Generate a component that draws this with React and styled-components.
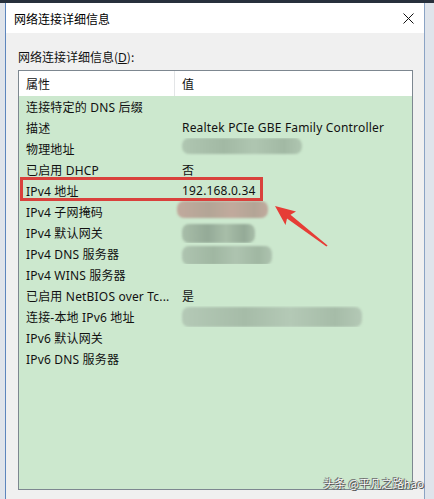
import React from "react";
import styled, { createGlobalStyle } from "styled-components";

const Global = createGlobalStyle`
  html, body { margin: 0; padding: 0; }
  body {
    background: #dfe4eb;
    font-family: "Noto Sans", "Noto Sans CJK SC", sans-serif;
    color: #111;
    overflow: hidden;
  }
`;

const Page = styled.div`
  position: relative;
  width: 434px;
  height: 499px;
  border-top: 3px solid #27303c;
  box-sizing: border-box;
  display: flex;
`;

const Window = styled.div`
  margin-left: 5px;
  width: 420px;
  height: 496px;
  border-left: 1px solid #5d86bd;
  border-right: 1px solid #8aa3c4;
  box-sizing: border-box;
  background: #f0f0f0;
  display: flex;
  flex-direction: column;
`;

const TitleBar = styled.div`
  height: 30px;
  background: #ffffff;
  display: flex;
  align-items: center;
  justify-content: space-between;
  padding: 0 10px 0 8px;
  font-size: 12px;
  font-family: "Noto Sans CJK SC", sans-serif;
  color: #000;
  flex-shrink: 0;
`;

const Body = styled.div`
  flex: 1;
  display: flex;
  flex-direction: column;
  padding: 14px 11px 9px 12px;
  gap: 3px;
`;

const Label = styled.div`
  font-size: 12px;
  line-height: 19px;
  font-family: "Noto Sans CJK SC", sans-serif;
  u { text-decoration: underline; font-family: "Noto Sans", sans-serif; }
`;

const ListBox = styled.div`
  flex: 1;
  border: 1px solid #7d8790;
  background: #cce8ce;
  display: flex;
  flex-direction: column;
`;

const HeaderRow = styled.div`
  height: 25px;
  background: #ffffff;
  display: grid;
  grid-template-columns: 156px 1fr;
  font-size: 12px;
`;

const HeaderCell = styled.div`
  display: flex;
  align-items: center;
  padding-left: 7px;
  border-right: ${(p) => (p.$sep ? "1px solid #e3e5e7" : "none")};
  font-family: "Noto Sans CJK SC", sans-serif;
`;

const Row = styled.div`
  position: relative;
  height: 21px;
  display: grid;
  grid-template-columns: 156px 1fr;
  font-size: 12px;
  letter-spacing: 0.18px;
  white-space: nowrap;
`;

const Cell = styled.div`
  display: flex;
  align-items: center;
  padding-left: 7px;
  overflow: hidden;
`;

const Blur = styled.span`
  display: inline-block;
  width: ${(p) => p.$w}px;
  height: ${(p) => p.$h}px;
  margin-left: ${(p) => p.$dx || 0}px;
  margin-top: ${(p) => p.$dy || 0}px;
  background: linear-gradient(
    90deg,
    ${(p) => p.$c} 0%,
    ${(p) => p.$c2} 35%,
    ${(p) => p.$c} 60%,
    ${(p) => p.$c2} 85%,
    ${(p) => p.$c} 100%
  );
  border-radius: 7px;
  filter: blur(1.3px);
`;

const Highlight = styled.div`
  position: absolute;
  left: 1px;
  top: -3px;
  width: 243px;
  height: 24px;
  border: 3px solid #d9413c;
  box-sizing: border-box;
  pointer-events: none;
`;

const Arrow = styled.svg`
  position: absolute;
  left: 0;
  top: 0;
  pointer-events: none;
`;

const Watermark = styled.div`
  position: absolute;
  right: 10px;
  bottom: 8px;
  font-size: 11px;
  color: #ffffff;
  font-family: "Noto Sans CJK SC", sans-serif;
  text-shadow: 0 0 1px #333, 1px 1px 0 #555, -1px -1px 0 #777;
  letter-spacing: 0.2px;
`;

const rows = [
  { k: "连接特定的 DNS 后缀", v: "" },
  { k: "描述", v: "Realtek PCIe GBE Family Controller" },
  { k: "物理地址", blur: { w: 120, h: 16, dy: -6, c: "#afc6b1", c2: "#a2b9a4" } },
  { k: "已启用 DHCP", v: "否" },
  { k: "IPv4 地址", v: "192.168.0.34", hl: true },
  { k: "IPv4 子网掩码", blur: { w: 91, h: 17, dx: -5, dy: -5, c: "#c1aa9d", c2: "#b3a596" } },
  { k: "IPv4 默认网关", blur: { w: 73, h: 19, dy: 1, c: "#a8bea9", c2: "#94aa97" } },
  { k: "IPv4 DNS 服务器", blur: { w: 90, h: 19, dy: 4, c: "#aec4b0", c2: "#a0b7a2" } },
  { k: "IPv4 WINS 服务器", v: "" },
  { k: "已启用 NetBIOS over Tc...", v: "是" },
  { k: "连接-本地 IPv6 地址", blur: { w: 180, h: 20, dy: 1, c: "#b4c9b6", c2: "#a6bca8" } },
  { k: "IPv6 默认网关", v: "" },
  { k: "IPv6 DNS 服务器", v: "" },
];

function CloseIcon() {
  return (
    <svg width="11" height="11" viewBox="0 0 11 11">
      <path d="M0.5 0.5 L10.5 10.5 M10.5 0.5 L0.5 10.5" stroke="#111" strokeWidth="1" fill="none" />
    </svg>
  );
}

export default function App() {
  return (
    <>
      <Global />
      <Page>
        <Window>
          <TitleBar>
            <span>网络连接详细信息</span>
            <CloseIcon />
          </TitleBar>
          <Body>
            <Label>
              网络连接详细信息(<u>D</u>):
            </Label>
            <ListBox>
              <HeaderRow>
                <HeaderCell $sep>属性</HeaderCell>
                <HeaderCell>值</HeaderCell>
              </HeaderRow>
              {rows.map((r, i) => (
                <Row key={i}>
                  <Cell>{r.k}</Cell>
                  <Cell>
                    {r.blur ? (
                      <Blur
                        $w={r.blur.w}
                        $h={r.blur.h}
                        $dx={r.blur.dx}
                        $dy={r.blur.dy}
                        $c={r.blur.c}
                        $c2={r.blur.c2}
                      />
                    ) : (
                      r.v
                    )}
                  </Cell>
                  {r.hl && <Highlight />}
                </Row>
              ))}
            </ListBox>
          </Body>
        </Window>
        <Arrow width="434" height="499" viewBox="0 0 434 499">
          <polygon
            points="275,203 296,208.5 290.5,211.8 327.6,242.4 326.4,243.6 287,215.6 285.5,222"
            fill="#e63d36"
          />
        </Arrow>
        <Watermark>头条 @平凡之路hao</Watermark>
      </Page>
    </>
  );
}
